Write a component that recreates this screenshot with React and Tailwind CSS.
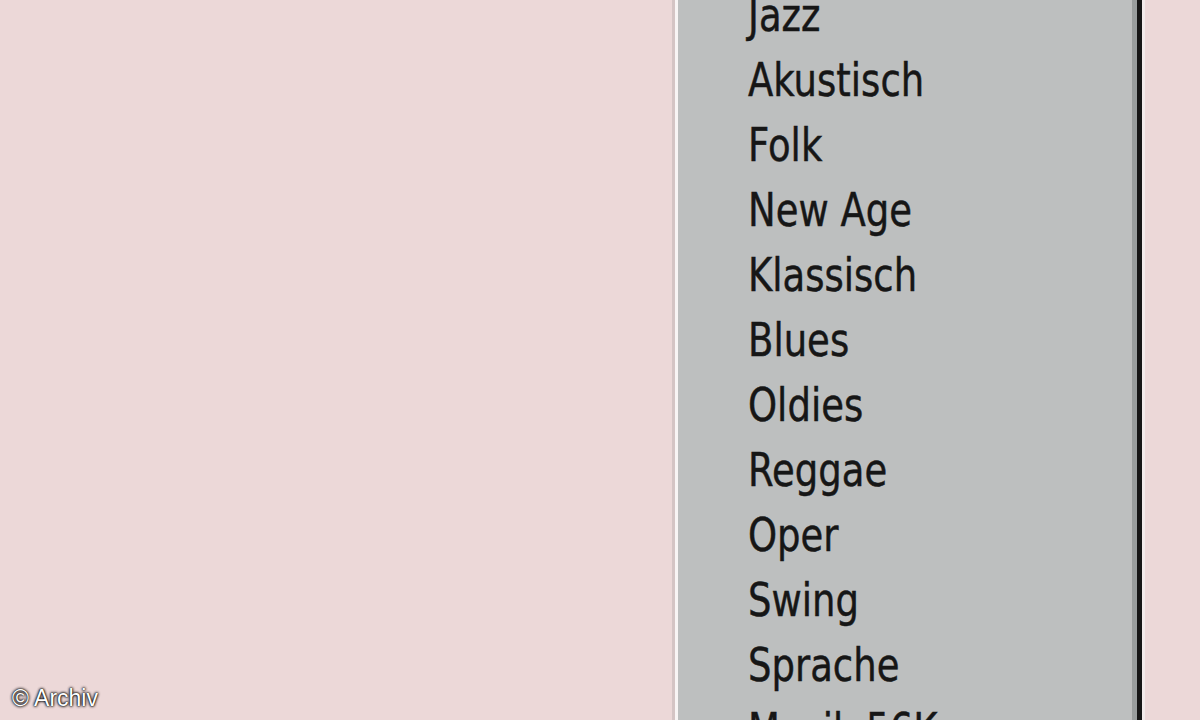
import React from "react";

const genres = [
  "Jazz",
  "Akustisch",
  "Folk",
  "New Age",
  "Klassisch",
  "Blues",
  "Oldies",
  "Reggae",
  "Oper",
  "Swing",
  "Sprache",
  "Musik 56K",
];

const App = () => {
  return (
    <div className="relative flex h-[720px] w-[1200px] overflow-hidden bg-[#ecd8d8]">
      <div className="w-[672px] shrink-0" />

      <div className="flex h-full w-[473px] shrink-0">
        <div className="w-[3px] bg-[#d4c4c4]" />
        <div className="w-[3px] bg-[#f8f4f4]" />
        <div className="flex-1 bg-[#bdbfbf] pl-[70px]">
          <ul className="mt-[-17px]">
            {genres.map((g) => (
              <li key={g} className="flex h-[65px] items-center">
                <span
                  className="inline-block origin-center scale-y-[1.24] text-[37px] leading-none text-[#161616] [-webkit-text-stroke:0.4px_#161616]"
                  style={{ fontFamily: '"DejaVu Sans", Verdana, sans-serif' }}
                >
                  {g}
                </span>
              </li>
            ))}
          </ul>
        </div>
        <div className="w-[5px] bg-[#9a9e9e]" />
        <div className="w-[5px] bg-[#161616]" />
        <div className="w-[3px] bg-[#f2eaea]" />
      </div>

      <div className="flex-1" />

      <span
        className="absolute left-[12px] top-[687px] text-[23px] leading-none text-white [text-shadow:0_0_3px_#000,0_0_3px_#000,0_0_1px_#000]"
        style={{ fontFamily: '"Liberation Sans", Arial, sans-serif' }}
      >
        © Archiv
      </span>
    </div>
  );
};

export default App;
